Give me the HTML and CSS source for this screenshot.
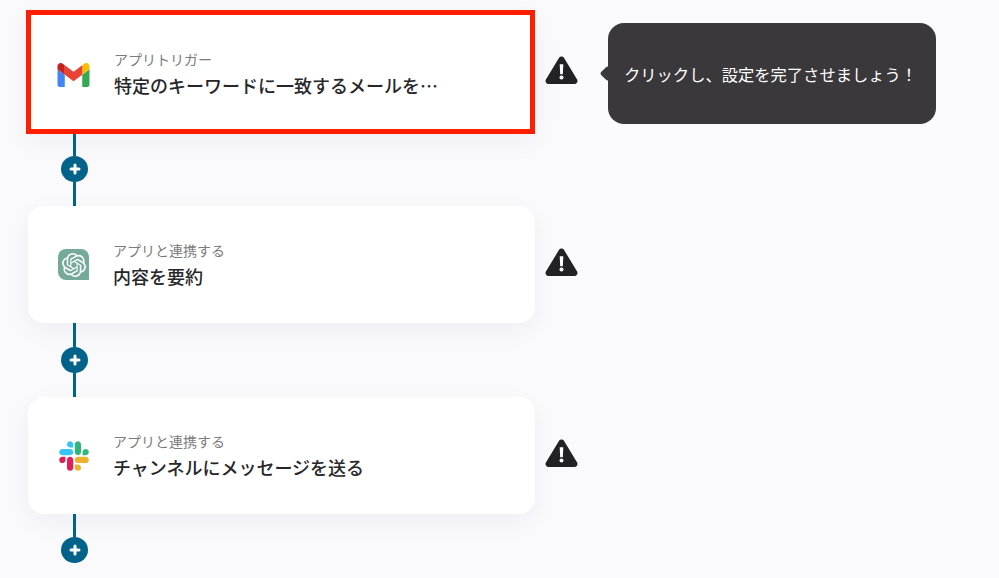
FILE: index.html
```html
<!DOCTYPE html>
<html lang="ja">
<head>
  <meta charset="UTF-8">
  <meta name="viewport" content="width=device-width, initial-scale=1.0">
  <title>フローボット</title>
  <link rel="stylesheet" href="styles.css">
</head>
<body>

  <div class="flow">

    <div class="step">
      <div class="card card-selected">
        <svg class="app-icon gmail-icon" viewBox="52 42 88 66">
          <path fill="#4285f4" d="M58 108h14V74L52 59v43c0 3.32 2.69 6 6 6"/>
          <path fill="#34a853" d="M120 108h14c3.32 0 6-2.69 6-6V59l-20 15"/>
          <path fill="#fbbc04" d="M120 48v26l20-15v-8c0-7.42-8.47-11.65-14.4-7.2"/>
          <path fill="#ea4335" d="M72 74V48l24 18 24-18v26L96 92"/>
          <path fill="#c5221f" d="M52 51v8l20 15V48l-5.6-4.2c-5.94-4.45-14.4-.22-14.4 7.2"/>
        </svg>
        <div class="card-text">
          <div class="card-label">アプリトリガー</div>
          <div class="card-title">特定のキーワードに一致するメールを…</div>
        </div>
      </div>
      <svg class="warning" viewBox="0 0 33 28">
        <path fill="#222226" d="M13.9 2 .9 23.6C-.2 25.6 1.1 28 3.4 28h26.2c2.3 0 3.6-2.4 2.5-4.4L19.1 2c-1.1-2-4-2-5.2 0z"/>
        <path fill="#fff" d="M14.7 8.2h3.6l-.5 10h-2.6z"/>
        <circle fill="#fff" cx="16.5" cy="21.6" r="2"/>
      </svg>
      <div class="tooltip">クリックし、設定を完了させましょう！</div>
    </div>

    <div class="connector connector-short">
      <span class="line"></span>
      <span class="plus"></span>
      <span class="line"></span>
    </div>

    <div class="step">
      <div class="card">
        <div class="chatgpt-icon">
          <svg viewBox="0 0 24 24">
            <path fill="#fff" d="M22.2819 9.8211a5.9847 5.9847 0 0 0-.5157-4.9108 6.0462 6.0462 0 0 0-6.5098-2.9A6.0651 6.0651 0 0 0 4.9807 4.1818a5.9847 5.9847 0 0 0-3.9977 2.9 6.0462 6.0462 0 0 0 .7427 7.0966 5.98 5.98 0 0 0 .511 4.9107 6.051 6.051 0 0 0 6.5146 2.9001A5.9847 5.9847 0 0 0 13.2599 24a6.0557 6.0557 0 0 0 5.7718-4.2058 5.9894 5.9894 0 0 0 3.9977-2.9001 6.0557 6.0557 0 0 0-.7475-7.0729zm-9.022 12.6081a4.4755 4.4755 0 0 1-2.8764-1.0408l.1419-.0804 4.7783-2.7582a.7948.7948 0 0 0 .3927-.6813v-6.7369l2.02 1.1686a.071.071 0 0 1 .038.052v5.5826a4.504 4.504 0 0 1-4.4945 4.4944zm-9.6607-4.1254a4.4708 4.4708 0 0 1-.5346-3.0137l.142.0852 4.783 2.7582a.7712.7712 0 0 0 .7806 0l5.8428-3.3685v2.3324a.0804.0804 0 0 1-.0332.0615L9.74 19.9502a4.4992 4.4992 0 0 1-6.1408-1.6464zM2.3408 7.8956a4.485 4.485 0 0 1 2.3655-1.9728V11.6a.7664.7664 0 0 0 .3879.6765l5.8144 3.3543-2.0201 1.1685a.0757.0757 0 0 1-.071 0l-4.8303-2.7865A4.504 4.504 0 0 1 2.3408 7.872zm16.5963 3.8558L13.1038 8.364 15.1192 7.2a.0757.0757 0 0 1 .071 0l4.8303 2.7913a4.4944 4.4944 0 0 1-.6765 8.1042v-5.6772a.79.79 0 0 0-.407-.667zm2.0107-3.0231l-.142-.0852-4.7735-2.7818a.7759.7759 0 0 0-.7854 0L9.409 9.2297V6.8974a.0662.0662 0 0 1 .0284-.0615l4.8303-2.7866a4.4992 4.4992 0 0 1 6.6802 4.66zM8.3065 12.863l-2.02-1.1638a.0804.0804 0 0 1-.038-.0567V6.0742a4.4992 4.4992 0 0 1 7.3757-3.4537l-.142.0805L8.704 5.459a.7948.7948 0 0 0-.3927.6813zm1.0976-2.3654l2.602-1.4998 2.6069 1.4998v2.9994l-2.5974 1.4997-2.6067-1.4997Z"/>
          </svg>
        </div>
        <div class="card-text">
          <div class="card-label">アプリと連携する</div>
          <div class="card-title">内容を要約</div>
        </div>
      </div>
      <svg class="warning" viewBox="0 0 33 28">
        <path fill="#222226" d="M13.9 2 .9 23.6C-.2 25.6 1.1 28 3.4 28h26.2c2.3 0 3.6-2.4 2.5-4.4L19.1 2c-1.1-2-4-2-5.2 0z"/>
        <path fill="#fff" d="M14.7 8.2h3.6l-.5 10h-2.6z"/>
        <circle fill="#fff" cx="16.5" cy="21.6" r="2"/>
      </svg>
    </div>

    <div class="connector">
      <span class="line"></span>
      <span class="plus"></span>
      <span class="line"></span>
    </div>

    <div class="step">
      <div class="card">
        <svg class="app-icon slack-icon" viewBox="0 0 127 127">
          <path fill="#e01e5a" d="M27.2 80c0 7.3-5.9 13.2-13.2 13.2C6.7 93.2.8 87.3.8 80c0-7.3 5.9-13.2 13.2-13.2h13.2V80zm6.6 0c0-7.3 5.9-13.2 13.2-13.2 7.3 0 13.2 5.9 13.2 13.2v33c0 7.3-5.9 13.2-13.2 13.2-7.3 0-13.2-5.9-13.2-13.2V80z"/>
          <path fill="#36c5f0" d="M47 27c-7.3 0-13.2-5.9-13.2-13.2C33.8 6.5 39.7.6 47 .6c7.3 0 13.2 5.9 13.2 13.2V27H47zm0 6.7c7.3 0 13.2 5.9 13.2 13.2 0 7.3-5.9 13.2-13.2 13.2H13.9C6.6 60.1.7 54.2.7 46.9c0-7.3 5.9-13.2 13.2-13.2H47z"/>
          <path fill="#2eb67d" d="M99.9 46.9c0-7.3 5.9-13.2 13.2-13.2 7.3 0 13.2 5.9 13.2 13.2 0 7.3-5.9 13.2-13.2 13.2H99.9V46.9zm-6.6 0c0 7.3-5.9 13.2-13.2 13.2-7.3 0-13.2-5.9-13.2-13.2V13.8C66.9 6.5 72.8.6 80.1.6c7.3 0 13.2 5.9 13.2 13.2v33.1z"/>
          <path fill="#ecb22e" d="M80.1 99.8c7.3 0 13.2 5.9 13.2 13.2 0 7.3-5.9 13.2-13.2 13.2-7.3 0-13.2-5.9-13.2-13.2V99.8h13.2zm0-6.6c-7.3 0-13.2-5.9-13.2-13.2 0-7.3 5.9-13.2 13.2-13.2h33.1c7.3 0 13.2 5.9 13.2 13.2 0 7.3-5.9 13.2-13.2 13.2H80.1z"/>
        </svg>
        <div class="card-text">
          <div class="card-label">アプリと連携する</div>
          <div class="card-title">チャンネルにメッセージを送る</div>
        </div>
      </div>
      <svg class="warning" viewBox="0 0 33 28">
        <path fill="#222226" d="M13.9 2 .9 23.6C-.2 25.6 1.1 28 3.4 28h26.2c2.3 0 3.6-2.4 2.5-4.4L19.1 2c-1.1-2-4-2-5.2 0z"/>
        <path fill="#fff" d="M14.7 8.2h3.6l-.5 10h-2.6z"/>
        <circle fill="#fff" cx="16.5" cy="21.6" r="2"/>
      </svg>
    </div>

    <div class="connector connector-last">
      <span class="line"></span>
      <span class="plus"></span>
    </div>

  </div>

</body>
</html>
```

FILE: styles.css
```css
html, body {
  height: 100%;
}

body {
  margin: 0;
  overflow: hidden;
  background-color: #faf9fc;
  font-family: 'Noto Sans CJK JP', 'Noto Sans', sans-serif;
}

.flow {
  display: flex;
  flex-direction: column;
  padding: 10px 0 0 28px;
}

.step {
  display: flex;
  align-items: center;
}

.card {
  box-sizing: border-box;
  display: flex;
  align-items: center;
  gap: 25px;
  width: 507px;
  height: 117px;
  padding-left: 30px;
  background-color: #fff;
  border-radius: 16px;
  box-shadow: 0 8px 24px rgba(40, 30, 80, 0.05);
}

.card-selected {
  width: 509px;
  height: 124px;
  margin-left: -2px;
  padding-left: 26px;
  border: 5px solid #ff1e00;
  border-radius: 0;
}

.card-selected .card-text {
  margin-top: 3px;
}

.app-icon {
  flex: none;
  width: 31px;
  height: 30px;
}

.gmail-icon {
  width: 33px;
  height: 24px;
  margin: 6px 0 0 0;
}

.slack-icon {
  width: 30px;
  height: 30px;
  margin-left: 1px;
}

.chatgpt-icon {
  flex: none;
  display: flex;
  align-items: center;
  justify-content: center;
  width: 31px;
  height: 31px;
  background-color: #74a99c;
  border-radius: 8px 8px 0 8px;
}

.chatgpt-icon svg {
  width: 24px;
  height: 24px;
}

.card-text {
  display: flex;
  flex-direction: column;
  gap: 3px;
  margin-left: -1px;
}

.card-selected .card-text {
  margin-left: -1px;
}

.card-label {
  font-size: 14px;
  line-height: 20px;
  color: #7b7b7b;
}

.card-title {
  font-size: 18px;
  line-height: 26px;
  font-weight: 500;
  color: #27272a;
}

.warning {
  flex: none;
  width: 33px;
  height: 28px;
  margin: 0 0 5px 10px;
}

.tooltip {
  position: relative;
  flex: none;
  box-sizing: border-box;
  width: 328px;
  height: 101px;
  margin: 3px 0 0 30px;
  padding: 0 0 0 16px;
  display: flex;
  align-items: center;
  font-size: 16.3px;
  color: #fff;
  background-color: #3a383b;
  border-radius: 16px;
}

.tooltip::before {
  content: '';
  position: absolute;
  left: -6px;
  top: 45px;
  width: 11px;
  height: 11px;
  background-color: #3a383b;
  border-radius: 2px;
  transform: rotate(45deg);
}

.connector {
  display: flex;
  flex-direction: column;
  align-items: center;
  width: 27px;
  height: 74px;
  margin-left: 33px;
}

.connector-short {
  height: 72px;
}

.connector-short .line:first-child {
  flex: 0 0 22px;
}

.connector-last {
  height: 49px;
}

.line {
  flex: 1;
  width: 3px;
  background-color: #03628a;
}

.plus {
  position: relative;
  flex: none;
  width: 27px;
  height: 26px;
  background-color: #03628a;
  border-radius: 50%;
}

.plus::before,
.plus::after {
  content: '';
  position: absolute;
  left: 50%;
  top: 50%;
  width: 11px;
  height: 3px;
  background-color: #fff;
  border-radius: 2px;
  transform: translate(-50%, -50%);
}

.plus::after {
  transform: translate(-50%, -50%) rotate(90deg);
}
```
